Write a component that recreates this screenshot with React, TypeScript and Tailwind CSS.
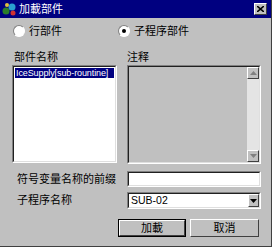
import React from 'react';

const font = { fontFamily: '"Liberation Sans", "Noto Sans CJK SC", sans-serif' };

const Radio = ({ checked, label }: { checked?: boolean; label: string }) => (
  <div className="flex items-center gap-[4px]">
    <div className="w-[12px] h-[12px] rounded-full border border-t-[#808080] border-l-[#808080] border-b-white border-r-white bg-white flex items-center justify-center">
      {checked && <div className="w-[4px] h-[4px] rounded-full bg-black" />}
    </div>
    <span className="text-[11px] leading-[14px] text-black">{label}</span>
  </div>
);

const Sunken = ({ className, children }: { className: string; children?: React.ReactNode }) => (
  <div className={`border border-t-[#808080] border-l-[#808080] border-b-white border-r-white ${className}`}>
    <div className="w-full h-full border border-t-[#202020] border-l-[#202020] border-b-[#dfdfdf] border-r-[#dfdfdf] flex">
      {children}
    </div>
  </div>
);

const ScrollBtn = ({ up }: { up?: boolean }) => (
  <div className="w-[12px] h-[12px] bg-[#c0c0c0] border border-t-white border-l-white border-b-[#404040] border-r-[#404040] flex items-center justify-center">
    <svg width="7" height="4" viewBox="0 0 7 4">
      {up ? <path d="M3.5 0 L7 4 L0 4 Z" fill="#808080" /> : <path d="M0 0 L7 0 L3.5 4 Z" fill="#808080" />}
    </svg>
  </div>
);

const Button = ({ label, primary }: { label: string; primary?: boolean }) => (
  <div className={`h-[18px] ${primary ? 'w-[68px] border border-black' : 'w-[69px]'}`}>
    <div className="w-full h-full bg-[#c0c0c0] border border-t-white border-l-white border-b-[#404040] border-r-[#404040] flex items-center justify-center text-[11px] leading-none">
      {label}
    </div>
  </div>
);

export default function App() {
  return (
    <div className="w-[272px] h-[247px] bg-[#c0c0c0] flex flex-col text-black border-r border-b border-r-[#404040] border-b-[#404040] overflow-hidden" style={font}>
      {/* title bar */}
      <div className="h-[18px] bg-[#000080] flex items-center pl-[2px] pr-[4px] shrink-0">
        <svg width="15" height="14" viewBox="0 0 15 14" className="mr-[2px]">
          <circle cx="4" cy="9" r="3.5" fill="#2b7d2b" />
          <circle cx="10" cy="5" r="3.5" fill="#2aa0d0" />
          <circle cx="11" cy="11" r="2.5" fill="#d03030" />
          <circle cx="5" cy="3" r="2" fill="#e0c040" />
        </svg>
        <span className="text-white text-[11px] leading-none">加載部件</span>
        <div className="ml-auto w-[13px] h-[12px] bg-[#c0c0c0] border border-t-white border-l-white border-b-[#404040] border-r-[#404040] flex items-center justify-center">
          <svg width="7" height="6" viewBox="0 0 7 6">
            <path d="M0 0 L7 6 M7 0 L0 6" stroke="black" strokeWidth="1.6" />
          </svg>
        </div>
      </div>

      {/* radios */}
      <div className="flex mt-[6px] pl-[13px] h-[14px]">
        <div className="w-[105px]"><Radio label="行部件" /></div>
        <Radio checked label="子程序部件" />
      </div>

      {/* labels */}
      <div className="flex mt-[12px] h-[14px] text-[11px] leading-[14px]">
        <span className="pl-[14px] w-[127px]">部件名称</span>
        <span>注释</span>
      </div>

      {/* list + comment */}
      <div className="flex mt-[1px] pl-[12px] gap-[10px]">
        <Sunken className="w-[105px] h-[98px] bg-white">
          <div className="w-full bg-white pt-[1px] px-[1px]">
            <div className="h-[10px] bg-[#000080] text-white text-[9px] leading-[10px] px-[1px] tracking-[-0.1px] whitespace-nowrap overflow-hidden">
              IceSupply[sub-rountine]
            </div>
          </div>
        </Sunken>
        <Sunken className="w-[134px] h-[99px] bg-[#c0c0c0]">
          <div className="flex-1" />
          <div className="w-[12px] flex flex-col bg-[#e4e4e4]">
            <ScrollBtn up />
            <div className="flex-1" />
            <ScrollBtn />
          </div>
        </Sunken>
      </div>

      {/* prefix */}
      <div className="flex items-center mt-[7px] h-[16px]">
        <span className="pl-[17px] w-[127px] text-[11px] leading-none">符号变量名称的前缀</span>
        <Sunken className="w-[134px] h-[16px] bg-white" />
      </div>

      {/* subroutine */}
      <div className="flex items-center mt-[5px] h-[17px]">
        <span className="pl-[17px] w-[127px] text-[11px] leading-none">子程序名称</span>
        <Sunken className="w-[134px] h-[17px] bg-white">
          <div className="flex-1 bg-white text-[10.5px] leading-[13px] pl-[2px]">SUB-02</div>
          <div className="w-[11px] h-full bg-[#c0c0c0] border border-t-white border-l-white border-b-[#404040] border-r-[#404040] flex items-center justify-center">
            <svg width="7" height="4" viewBox="0 0 7 4">
              <path d="M0 0 L7 0 L3.5 4 Z" fill="black" />
            </svg>
          </div>
        </Sunken>
      </div>

      {/* buttons */}
      <div className="flex mt-[10px] pl-[118px] gap-[4px]">
        <Button primary label="加載" />
        <Button label="取消" />
      </div>
    </div>
  );
}
